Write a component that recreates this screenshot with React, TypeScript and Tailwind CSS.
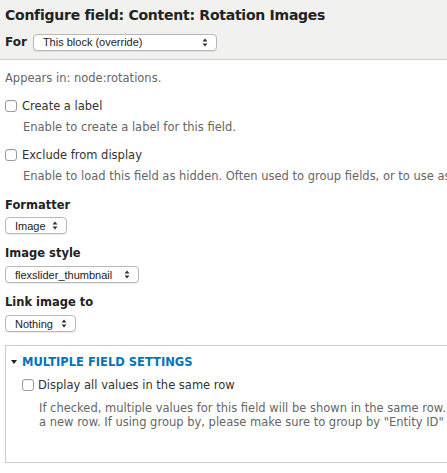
import React from 'react';

function Chevrons() {
  return (
    <svg width="6" height="9" viewBox="0 0 6 9" className="shrink-0">
      <path d="M3 0.5 L5.5 3.5 H0.5 Z" fill="#333" />
      <path d="M3 8.5 L5.5 5.5 H0.5 Z" fill="#333" />
    </svg>
  );
}

function FakeSelect({ label, width }: { label: string; width: string }) {
  return (
    <div
      className={`${width} h-[17px] flex items-center justify-between pl-[9px] pr-[8px] bg-white border border-[#b8b8b8] rounded-[4px] shadow-[0_1px_1px_rgba(0,0,0,0.08)] text-[11px] leading-[14px] text-[#222] font-['Liberation_Sans',Arial,sans-serif]`}
    >
      <span>{label}</span>
      <Chevrons />
    </div>
  );
}

function Box() {
  return <span className="w-[12px] h-[12px] shrink-0 rounded-[3px] border border-[#9a9a9a] bg-white shadow-[inset_0_1px_1px_rgba(0,0,0,0.06)]" />;
}

export default function App() {
  return (
    <div className="w-[447px] h-[473px] overflow-hidden bg-white font-['DejaVu_Sans',Verdana,sans-serif] text-[#333]">
      <div className="w-[700px]">
        <div className="h-[60px] bg-[#f1f1ef] border-b border-[#cfcfcf] px-[5px] pt-[5px]">
          <h1 className="text-[14px] leading-[20px] font-bold text-[#222] tracking-[-0.25px]">
            Configure field: Content: Rotation Images
          </h1>
          <div className="flex items-center gap-[6px] mt-[8px]">
            <span className="text-[12px] font-bold text-[#222]">For</span>
            <FakeSelect label="This block (override)" width="w-[184px]" />
          </div>
        </div>

        <div className="px-[5px] text-[11.5px] leading-[14px] whitespace-nowrap">
          <p className="mt-[11px] text-[#666]">Appears in: node:rotations.</p>

          <div className="mt-[14px] h-[14px] flex items-center gap-[5px] text-[#333]">
            <Box />
            <span>Create a label</span>
          </div>
          <p className="mt-[7px] pl-[18px] text-[#666]">Enable to create a label for this field.</p>

          <div className="mt-[14px] h-[14px] flex items-center gap-[5px] text-[#333]">
            <Box />
            <span>Exclude from display</span>
          </div>
          <p className="mt-[7px] pl-[18px] text-[#666]">
            Enable to load this field as hidden. Often used to group fields, or to use as token in another field.
          </p>

          <h2 className="mt-[15px] text-[11.5px] font-bold text-[#222]">Formatter</h2>
          <div className="mt-[5px]">
            <FakeSelect label="Image" width="w-[62px]" />
          </div>

          <h2 className="mt-[12px] text-[11.5px] font-bold text-[#222]">Image style</h2>
          <div className="mt-[6px]">
            <FakeSelect label="flexslider_thumbnail" width="w-[134px]" />
          </div>

          <h2 className="mt-[12px] text-[11.5px] font-bold text-[#222]">Link image to</h2>
          <div className="mt-[6px]">
            <FakeSelect label="Nothing" width="w-[71px]" />
          </div>

          <div className="mt-[13px] h-[118px] border border-[#cccccc] pl-[5px] pt-[9px]">
            <div className="h-[14px] flex items-center gap-[5px]">
              <svg width="6" height="4" viewBox="0 0 6 4">
                <path d="M0 0 H6 L3 4 Z" fill="#222" />
              </svg>
              <span className="text-[11.5px] font-bold text-[#0074bd]">MULTIPLE FIELD SETTINGS</span>
            </div>
            <div className="mt-[9px] ml-[11px] h-[14px] flex items-center gap-[4px] text-[#333]">
              <Box />
              <span>Display all values in the same row</span>
            </div>
            <div className="mt-[9px] ml-[28px] text-[#666]">
              <p>If checked, multiple values for this field will be shown in the same row. If not checked, each value in this field will create</p>
              <p>a new row. If using group by, please make sure to group by "Entity ID" for this setting to have any effect.</p>
            </div>
          </div>
        </div>
      </div>
    </div>
  );
}
